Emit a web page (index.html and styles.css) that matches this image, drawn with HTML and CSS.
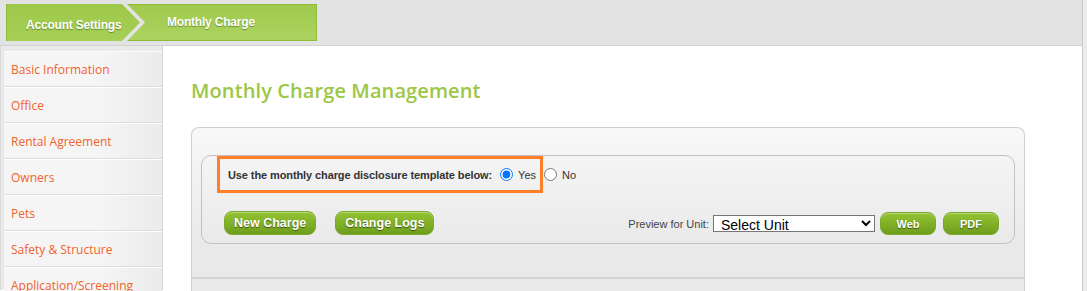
FILE: index.html
```html
<!DOCTYPE html>
<html lang="en">
<head>
    <meta charset="UTF-8">
    <meta name="viewport" content="width=device-width, initial-scale=1.0">
    <title>Monthly Charge</title>
    <link rel="stylesheet" href="styles.css">
</head>
<body>
    <div class="page">
        <div class="topbar">
            <div class="crumbs">
                <a class="crumb crumb-first" href="#">Account Settings</a>
                <a class="crumb crumb-current" href="#">Monthly Charge</a>
            </div>
        </div>

        <div class="main">
            <ul class="sidebar">
                <li><a href="#">Basic Information</a></li>
                <li><a href="#">Office</a></li>
                <li><a href="#">Rental Agreement</a></li>
                <li><a href="#">Owners</a></li>
                <li><a href="#">Pets</a></li>
                <li><a href="#">Safety &amp; Structure</a></li>
                <li><a href="#">Application/Screening</a></li>
            </ul>

            <div class="content">
                <h1>Monthly Charge Management</h1>

                <div class="panel">
                    <div class="panel-head">
                        <div class="options">
                            <div class="template-row">
                                <div class="highlight">
                                    <span class="template-label">Use the monthly charge disclosure template below:</span>
                                    <label class="radio"><input type="radio" name="template" checked> Yes</label>
                                </div>
                                <label class="radio radio-no"><input type="radio" name="template"> No</label>
                            </div>

                            <div class="actions">
                                <div class="actions-left">
                                    <button class="btn">New Charge</button>
                                    <button class="btn">Change Logs</button>
                                </div>
                                <div class="actions-right">
                                    <label for="unit" class="preview-label">Preview for Unit:</label>
                                    <select id="unit">
                                        <option>Select Unit</option>
                                    </select>
                                    <button class="btn btn-small">Web</button>
                                    <button class="btn btn-small">PDF</button>
                                </div>
                            </div>
                        </div>
                    </div>
                    <div class="panel-body"></div>
                </div>
            </div>
        </div>
    </div>
</body>
</html>
```

FILE: styles.css
```css
body {
    margin: 0;
    padding: 0;
    background-color: #ececec;
    font-family: "Liberation Sans", Arial, sans-serif;
    overflow: hidden;
}

.page {
    width: 1082px;
    height: 291px;
    background-color: #fff;
    border-right: 1px solid #c9c9c9;
    overflow: hidden;
}

/* breadcrumb bar */
.topbar {
    height: 46px;
    background-color: #e3e3e3;
    border-bottom: 1px solid #d2d2d2;
    padding: 4px 0 0 6px;
    box-sizing: border-box;
}

.crumbs {
    display: flex;
    height: 37px;
}

.crumb {
    display: flex;
    align-items: center;
    color: #fff;
    font-weight: bold;
    font-size: 12px;
    letter-spacing: -0.2px;
    text-decoration: none;
    text-shadow: 0 1px 1px rgba(60, 90, 20, 0.6);
    background: linear-gradient(#9dc94a, #a6cf56);
    box-sizing: border-box;
    white-space: nowrap;
}

.crumb-first {
    width: 134px;
    padding: 4px 0 0 19px;
    border-left: 1px solid #8dbb3a;
    clip-path: polygon(0 0, calc(100% - 18px) 0, 100% 50%, calc(100% - 18px) 100%, 0 100%);
}

.crumb-current {
    width: 190px;
    margin-left: -13px;
    padding: 0 0 2px 39px;
    border: 1px solid #8dbb3a;
    background: linear-gradient(#9fca4c, #acd360);
    clip-path: polygon(0 0, 100% 0, 100% 100%, 0 100%, 18px 50%);
}

/* layout */
.main {
    display: flex;
    height: 244px;
}

.sidebar {
    list-style: none;
    margin: 0;
    padding: 5px 0 0 3px;
    width: 163px;
    box-sizing: border-box;
    background-color: #e9e9e9;
    border-left: 1px solid #dadada;
    border-right: 1px solid #d6d6d6;
    flex-shrink: 0;
}

.sidebar li {
    height: 34px;
    border-top: 1px solid #fff;
    border-bottom: 1px solid #dcdcdc;
    background: linear-gradient(to right, #f5f5f5 60%, #ebebeb);
    display: flex;
    align-items: center;
}

.sidebar a {
    padding-left: 7px;
    color: #f2622a;
    font-family: "Open Sans", sans-serif;
    font-size: 12px;
    text-decoration: none;
    white-space: nowrap;
}

.content {
    flex: 1;
    padding: 0 57px 0 28px;
}

h1 {
    margin: 31px 0 23px 0;
    font-family: "Open Sans", sans-serif;
    font-size: 20px;
    font-weight: 600;
    color: #9bc744;
    letter-spacing: 0.1px;
}

/* panel */
.panel {
    border: 1px solid #cfcfcf;
    border-bottom: none;
    border-radius: 8px 8px 0 0;
    background: linear-gradient(#f8f8f8, #e9e9e9 120px);
}

.panel-head {
    padding: 27px 9px 33px 9px;
    border-bottom: 2px solid #d5d2d2;
}

.options {
    border: 1px solid #c9bdbd;
    border-radius: 10px;
    padding: 0 15px 8px 15px;
}

.template-row {
    display: flex;
    align-items: center;
    font-size: 11px;
    color: #333;
}

.highlight {
    display: flex;
    align-items: center;
    height: 37px;
    padding: 0 4px 0 8px;
    border: 3px solid #ff7f27;
    box-sizing: border-box;
}

.template-label {
    font-weight: bold;
    letter-spacing: -0.1px;
    margin-right: 8px;
}

.radio {
    display: inline-flex;
    align-items: center;
    font-size: 11px;
}

.radio input {
    margin: 0 5px 0 0;
}

.radio-no {
    margin-left: 1px;
}

.actions {
    display: flex;
    justify-content: space-between;
    align-items: center;
    margin-top: 17px;
    padding-left: 7px;
}

.actions-left {
    display: flex;
    gap: 19px;
}

.actions-right {
    display: flex;
    align-items: center;
    margin-top: 2px;
}

.btn {
    height: 24px;
    padding: 0 9px;
    border: 1px solid #7aa82c;
    border-radius: 8px;
    background: linear-gradient(#93c332, #6f9e1e);
    box-shadow: inset 0 1px 0 rgba(255, 255, 255, 0.35);
    color: #fff;
    font-family: "Liberation Sans", Arial, sans-serif;
    font-size: 12.5px;
    font-weight: bold;
    text-shadow: 0 1px 1px rgba(0, 0, 0, 0.5);
    cursor: pointer;
}

.btn-small {
    width: 56px;
    height: 23px;
    font-size: 11px;
    padding: 0;
    margin-left: 7px;
}

.preview-label {
    font-size: 11px;
    color: #444;
    margin-right: 4px;
}

select {
    width: 162px;
    height: 17px;
    padding: 0 0 0 3px;
    border: 1px solid #767676;
    border-radius: 0;
    background-color: #fff;
    font-family: "Liberation Sans", Arial, sans-serif;
    font-size: 14px;
    color: #000;
    margin-right: -2px;
}

.panel-body {
    height: 40px;
}
```
